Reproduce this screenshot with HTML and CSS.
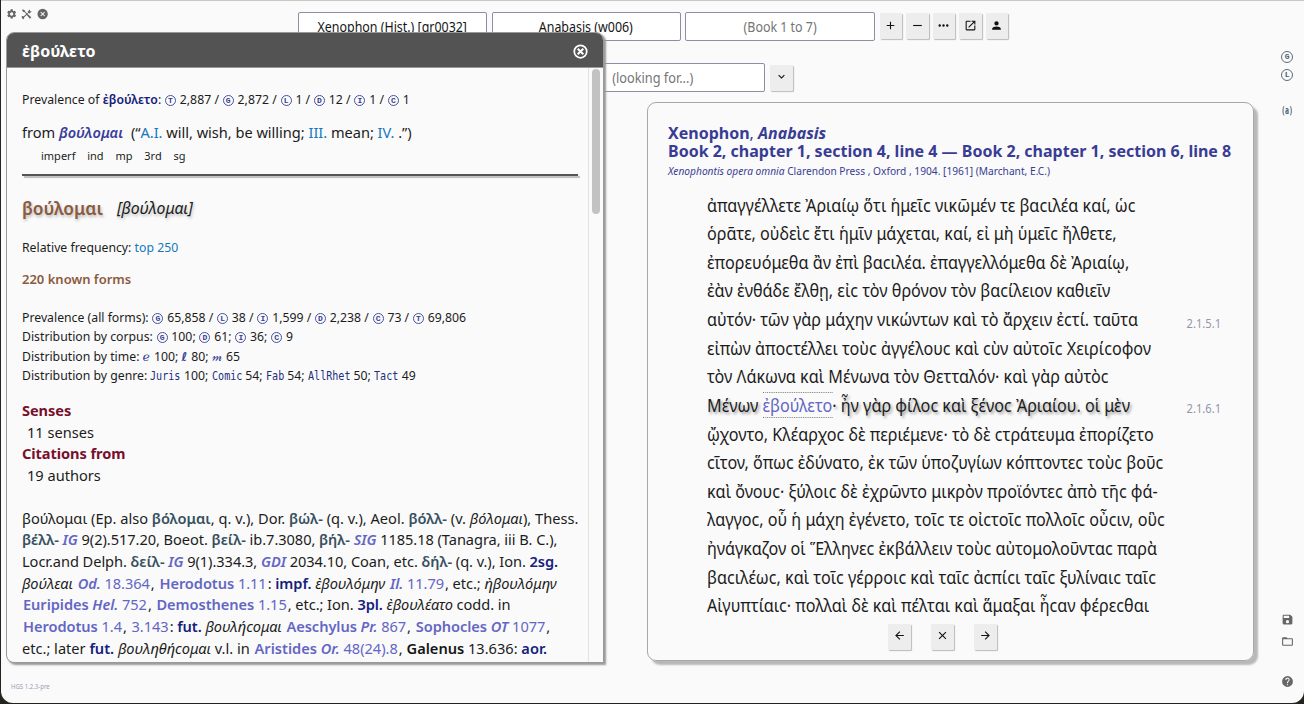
FILE: index.html
```html
<!DOCTYPE html>
<html lang="en">
<head>
<meta charset="utf-8">
<title>Xenophon, Anabasis</title>
<link rel="stylesheet" href="styles.css">
</head>
<body>
<svg class="defs" width="0" height="0" aria-hidden="true">
  <symbol id="gear" viewBox="0 0 24 24"><path fill-rule="evenodd" d="M19.140 12.940c.04-.3.06-.61.06-.94 0-.32-.02-.64-.07-.94l2.030-1.580a.49.49 0 0 0 .12-.61l-1.920-3.320a.49.49 0 0 0-.59-.22l-2.390.96a7 7 0 0 0-1.620-.94l-.36-2.540A.48.48 0 0 0 13.920 2h-3.840a.48.48 0 0 0-.47.41l-.36 2.540c-.59.24-1.130.57-1.620.94l-2.390-.96a.48.48 0 0 0-.59.22L2.740 8.870a.48.48 0 0 0 .12.61l2.030 1.580a6.500 6.500 0 0 0 0 1.880l-2.030 1.580a.49.49 0 0 0-.12.61l1.920 3.320c.12.22.37.29.59.22l2.390-.96c.5.38 1.030.7 1.620.94l.36 2.540c.05.24.24.41.48.41h3.840c.24 0 .44-.17.47-.41l.36-2.540a7 7 0 0 0 1.620-.94l2.390.96c.22.08.47 0 .59-.22l1.920-3.320a.48.48 0 0 0-.12-.61zM12 15.600a3.600 3.600 0 1 1 0-7.200 3.600 3.600 0 0 1 0 7.200z"/></symbol>
  <symbol id="tools" viewBox="0 0 24 24"><path d="M2 4l2-2 5 3v2l4 4 2-2-1-2 5-5v3l1 1h3l-5 5-2-1-2 2 8 7-3 3-7-8-6 6 1 2-3 1-2-3-1-2 2-2 3 1 5-5-4-4H5z"/></symbol>
  <symbol id="cancel" viewBox="0 0 24 24"><path fill-rule="evenodd" d="M12 1a11 11 0 1 0 0 22 11 11 0 0 0 0-22zm5 14.600L15.600 17 12 13.400 8.400 17 7 15.600 10.600 12 7 8.400 8.400 7 12 10.600 15.600 7 17 8.400 13.400 12z"/></symbol>
  <symbol id="close" viewBox="0 0 24 24"><circle cx="12" cy="12" r="10" fill="none" stroke="currentColor" stroke-width="2.800"/><path d="M7.500 7.500l9 9M16.500 7.500l-9 9" fill="none" stroke="currentColor" stroke-width="3.200"/></symbol>
  <symbol id="plus" viewBox="0 0 24 24"><path d="M19 13h-6v6h-2v-6H5v-2h6V5h2v6h6z"/></symbol>
  <symbol id="minus" viewBox="0 0 24 24"><path d="M20 13H4v-2h16z"/></symbol>
  <symbol id="dots" viewBox="0 0 24 24"><circle cx="5" cy="12" r="2.200"/><circle cx="12" cy="12" r="2.200"/><circle cx="19" cy="12" r="2.200"/></symbol>
  <symbol id="open" viewBox="0 0 24 24"><path d="M19 19H5V5h7V3H5a2 2 0 0 0-2 2v14a2 2 0 0 0 2 2h14a2 2 0 0 0 2-2v-7h-2zM14 3v2h3.590l-9.830 9.830 1.410 1.410L19 6.410V10h2V3z"/></symbol>
  <symbol id="person" viewBox="0 0 24 24"><path d="M12 12a4 4 0 1 0 0-8 4 4 0 0 0 0 8zm0 2c-2.670 0-8 1.340-8 4v2h16v-2c0-2.660-5.330-4-8-4z"/></symbol>
  <symbol id="chevron" viewBox="0 0 24 24"><path d="M7.410 8.590L12 13.170l4.590-4.580L18 10l-6 6-6-6z"/></symbol>
  <symbol id="back" viewBox="0 0 24 24"><path d="M20 11H7.830l5.590-5.590L12 4l-8 8 8 8 1.410-1.410L7.830 13H20z"/></symbol>
  <symbol id="times" viewBox="0 0 24 24"><path d="M19 6.410L17.590 5 12 10.590 6.410 5 5 6.410 10.590 12 5 17.590 6.410 19 12 13.410 17.590 19 19 17.590 13.410 12z"/></symbol>
  <symbol id="forward" viewBox="0 0 24 24"><path d="M12 4l-1.410 1.410L16.170 11H4v2h12.170l-5.580 5.590L12 20l8-8z"/></symbol>
  <symbol id="save" viewBox="0 0 24 24"><path d="M17 3H5a2 2 0 0 0-2 2v14a2 2 0 0 0 2 2h14a2 2 0 0 0 2-2V7zm-5 16a3 3 0 1 1 0-6 3 3 0 0 1 0 6zm3-10H5V5h10z"/></symbol>
  <symbol id="folder" viewBox="0 0 24 24"><path d="M20 6h-8l-2-2H4a2 2 0 0 0-2 2v12a2 2 0 0 0 2 2h16a2 2 0 0 0 2-2V8a2 2 0 0 0-2-2zm0 12H4V8h16z"/></symbol>
  <symbol id="help" viewBox="0 0 24 24"><path d="M12 2a10 10 0 1 0 0 20 10 10 0 0 0 0-20zm1 17h-2v-2h2zm2.070-7.750l-.9.920C13.450 12.900 13 13.500 13 15h-2v-.5c0-1.100.45-2.100 1.170-2.830l1.240-1.260A2 2 0 1 0 10 9H8a4 4 0 1 1 7.070 2.250z"/></symbol>
</svg>

<div class="window">
  <div class="app-tools">
    <svg><use href="#gear"/></svg><svg><use href="#tools"/></svg><svg><use href="#cancel"/></svg>
  </div>
  <main class="reader">
    <div class="selectors">
      <div class="field"><span>Xenophon (Hist.) [gr0032]</span></div>
      <div class="field"><span>Anabasis (w006)</span></div>
      <div class="field hint"><span>(Book 1 to 7)</span></div>
      <div class="buttons">
        <button><svg><use href="#plus"/></svg></button>
        <button><svg><use href="#minus"/></svg></button>
        <button><svg><use href="#dots"/></svg></button>
        <button><svg><use href="#open"/></svg></button>
        <button><svg><use href="#person"/></svg></button>
      </div>
    </div>
    <div class="search">
      <div class="field hint"><span>(looking for...)</span></div>
      <button><svg><use href="#chevron"/></svg></button>
    </div>
    <section class="passage">
      <h1>Xenophon<span class="light">,</span> <i>Anabasis</i></h1>
      <h1>Book 2, chapter 1, section 4, line 4 — Book 2, chapter 1, section 6, line 8</h1>
      <p class="edition"><span><i>Xenophontis opera omnia</i> Clarendon Press , Oxford , 1904. [1961] (Marchant, E.C.)</span></p>
      <div class="lines">
        <div><span>ἀπαγγέλλετε Ἀριαίῳ ὅτι ἡμεῖϲ νικῶμέν τε βαϲιλέα καί, ὡϲ</span></div>
        <div><span>ὁρᾶτε, οὐδεὶϲ ἔτι ἡμῖν μάχεται, καί, εἰ μὴ ὑμεῖϲ ἤλθετε,</span></div>
        <div><span>ἐπορευόμεθα ἂν ἐπὶ βαϲιλέα. ἐπαγγελλόμεθα δὲ Ἀριαίῳ,</span></div>
        <div><span>ἐὰν ἐνθάδε ἔλθῃ, εἰϲ τὸν θρόνον τὸν βαϲίλειον καθιεῖν</span></div>
        <div><span>αὐτόν· τῶν γὰρ μάχην νικώντων καὶ τὸ ἄρχειν ἐϲτί. ταῦτα</span><em>2.1.5.1</em></div>
        <div><span>εἰπὼν ἀποϲτέλλει τοὺϲ ἀγγέλουϲ καὶ ϲὺν αὐτοῖϲ Χειρίϲοφον</span></div>
        <div><span>τὸν Λάκωνα καὶ Μένωνα τὸν Θετταλόν· καὶ γὰρ αὐτὸϲ</span></div>
        <div><span class="current">Μένων <b>ἐβούλετο</b>· ἦν γὰρ φίλοϲ καὶ ξένοϲ Ἀριαίου. οἱ μὲν</span><em>2.1.6.1</em></div>
        <div><span>ᾤχοντο, Κλέαρχοϲ δὲ περιέμενε· τὸ δὲ ϲτράτευμα ἐπορίζετο</span></div>
        <div><span>ϲῖτον, ὅπωϲ ἐδύνατο, ἐκ τῶν ὑποζυγίων κόπτοντεϲ τοὺϲ βοῦϲ</span></div>
        <div><span>καὶ ὄνουϲ· ξύλοιϲ δὲ ἐχρῶντο μικρὸν προϊόντεϲ ἀπὸ τῆϲ φά-</span></div>
        <div><span>λαγγοϲ, οὗ ἡ μάχη ἐγένετο, τοῖϲ τε οἰϲτοῖϲ πολλοῖϲ οὖϲιν, οὓϲ</span></div>
        <div><span>ἠνάγκαζον οἱ Ἕλληνεϲ ἐκβάλλειν τοὺϲ αὐτομολοῦνταϲ παρὰ</span></div>
        <div><span>βαϲιλέωϲ, καὶ τοῖϲ γέρροιϲ καὶ ταῖϲ ἀϲπίϲι ταῖϲ ξυλίναιϲ ταῖϲ</span></div>
        <div><span>Αἰγυπτίαιϲ· πολλαὶ δὲ καὶ πέλται καὶ ἅμαξαι ἦϲαν φέρεϲθαι</span></div>
      </div>
      <div class="pager">
        <button><svg><use href="#back"/></svg></button>
        <button><svg><use href="#times"/></svg></button>
        <button><svg><use href="#forward"/></svg></button>
      </div>
    </section>
  </main>
  <aside class="rail">
    <span class="ring">G</span><span class="ring">L</span><span class="alpha">(a)</span>
    <svg class="first"><use href="#save"/></svg><svg><use href="#folder"/></svg><svg class="last"><use href="#help"/></svg>
  </aside>
  <footer><span>HGS 1.2.3-pre</span></footer>

  <section class="dialog">
    <header><span>ἐβούλετο</span><svg><use href="#close"/></svg></header>
    <div class="body">
      <div class="entry">
        <p class="small prevalence">Prevalence of <b class="navy">ἐβούλετο</b>: <s>T</s> 2,887 / <s>G</s> 2,872 / <s>L</s> 1 / <s>D</s> 12 / <s>I</s> 1 / <s>C</s> 1</p>
        <p class="from">from <b class="indigo"><i>βούλομαι</i></b>&nbsp; (“<a>A.I.</a> will, wish, be willing; <a>III.</a> mean; <a>IV.</a> .”)</p>
        <p class="parse"><span>imperf</span><span>ind</span><span>mp</span><span>3rd</span><span>sg</span></p>
        <hr>
        <p class="head"><b>βούλομαι</b><i>[βούλομαι]</i></p>
        <p class="small freq">Relative frequency: <a>top 250</a></p>
        <p class="small forms">220 known forms</p>
        <div class="stats small">
          <p>Prevalence (all forms): <s>G</s> 65,858 / <s>L</s> 38 / <s>I</s> 1,599 / <s>D</s> 2,238 / <s>C</s> 73 / <s>T</s> 69,806</p>
          <p>Distribution by corpus: <s>G</s> 100; <s>D</s> 61; <s>I</s> 36; <s>C</s> 9</p>
          <p>Distribution by time: <q>ℯ</q> 100; <q class="ell">ℓ</q> 80; <q>𝓂</q> 65</p>
          <p>Distribution by genre: <code style="--n:5"><span>Juris</span></code> 100; <code style="--n:5"><span>Comic</span></code> 54; <code style="--n:3"><span>Fab</span></code> 54; <code style="--n:7"><span>AllRhet</span></code> 50; <code style="--n:4"><span>Tact</span></code> 49</p>
        </div>
        <div class="summary">
          <h2>Senses</h2><p>11 senses</p>
          <h2>Citations from</h2><p>19 authors</p>
        </div>
        <div class="article">
          <p>βούλομαι (Ep. also <b class="slate">βόλομαι</b>, q. v.), Dor. <b class="slate">βώλ-</b> (q. v.), Aeol. <b class="slate">βόλλ-</b> (v. <i>βόλομαι</i>), Thess.</p>
          <p class="tight"><b class="slate">βέλλ-</b> <b><i>IG</i></b> 9(2).517.20, Boeot. <b class="slate">βείλ-</b> ib.7.3080, <b class="slate">βήλ-</b> <b><i>SIG</i></b> 1185.18 (Tanagra, iii B. C.),</p>
          <p class="tight">Locr.and Delph. <b class="slate">δείλ-</b> <b><i>IG</i></b> 9(1).334.3, <b><i>GDI</i></b> 2034.10, Coan, etc. <b class="slate">δήλ-</b> (q. v.), Ion. <b class="navy">2sg.</b></p>
          <p class="tight"><i>βούλεαι</i> <u><b><i>Od.</i></b> 18.364</u>, <u><b>Herodotus</b> 1.11</u>: <b class="navy">impf.</b> <i>ἐβουλόμην</i> <u><b><i>Il.</i></b> 11.79</u>, etc.; <i>ἠβουλόμην</i></p>
          <p class="tight"><u><b>Euripides <i>Hel.</i></b> 752</u>, <u><b>Demosthenes</b> 1.15</u>, etc.; Ion. <b class="navy">3pl.</b> <i>ἐβουλέατο</i> codd. in</p>
          <p class="tight"><u><b>Herodotus</b> 1.4</u>, <u>3.143</u>: <b class="navy">fut.</b> <i>βουλήϲομαι</i> <u><b>Aeschylus <i>Pr.</i></b> 867</u>, <u><b>Sophocles <i>OT</i></b> 1077</u>,</p>
          <p>etc.; later <b class="navy">fut.</b> <i>βουληθήϲομαι</i> v.l. in <u><b>Aristides <i>Or.</i></b> 48(24).8</u>, <b class="dark">Galenus</b> 13.636: <b class="navy">aor.</b></p>
        </div>
      </div>
      <div class="scroll"><div class="thumb"></div></div>
    </div>
  </section>
</div>
</body>
</html>
```

FILE: styles.css
```css
* { box-sizing: border-box; }
body { margin: 0; width: 1304px; height: 704px; overflow: hidden; background: #24241f; font-family: "Noto Sans", sans-serif; color: #1c1c1c; }
p, h1, h2 { margin: 0; font-weight: 400; }
s, u, a { text-decoration: none; }
svg { fill: currentColor; display: block; flex: none; }
.defs { position: absolute; }
b { font-weight: 600; }
.window { position: relative; height: 703px; margin-left: 1px; padding-top: 12px; background: #fafafa; border-radius: 0 0 12px 12px; box-shadow: inset 0 2px 0 -1px #c8c8c8; display: grid; grid-template-columns: 297px 960px 1fr; grid-template-rows: 665px 1fr; }
.app-tools { display: flex; gap: 4px; margin: -4px 0 0 5px; color: #666; height: 12px; }
.app-tools svg { width: 11.300px; height: 12px; }
.selectors { display: flex; gap: 4.500px; height: 29px; }
.field { display: flex; justify-content: center; width: 189px; height: 29px; border: 1px solid #8f8ca4; border-radius: 2px; background: #fff; font-size: 15px; line-height: 27px; white-space: nowrap; color: #151515; }
.field span { transform: scaleX(.828); }
.selectors .hint { width: 190px; }
.hint { color: #757575; }
.buttons { display: flex; gap: 4px; padding-top: 1px; }
button { width: 22.500px; height: 26px; padding: 0 0 2px; border: 0; border-radius: 1px; background: #ededed; box-shadow: 1px 1px 1px #bbb; display: flex; align-items: center; justify-content: center; color: #111; }
button svg { width: 13px; height: 13px; }
.search { display: flex; gap: 5px; margin: 22px 0 0 198px; }
.search .field { width: 269px; padding-left: 44px; }
.search .field span { transform: scaleX(.85); }
.search button { margin-top: 1.500px; }
.passage { width: 607px; height: 559px; margin: 10px 0 0 349px; padding: 21px 20px; border: 1px solid #a8a8a8; border-radius: 9px; box-shadow: 4px 4px 2px #b8b8b8; }
.passage h1 { font-size: 16px; line-height: 18px; font-weight: 700; color: #393c94; white-space: nowrap; }
.passage .light { font-weight: 400; }
.edition { font-size: 11px; line-height: 20px; margin-top: 1px; color: #393c94; white-space: nowrap; }
.edition span { display: inline-block; transform: scaleX(.926); transform-origin: 0 0; }
.lines { padding: 9.500px 12px 0 39px; font-size: 18px; white-space: nowrap; }
.lines div { display: flex; justify-content: space-between; height: 28.640px; line-height: 28.640px; }
.lines div > span { width: 0; transform: scaleX(.897); transform-origin: 0 0; }
.lines em { flex: none; font-size: 12px; font-style: normal; color: #9794aa; padding-top: 4.500px; transform: scaleX(.93); transform-origin: 100% 0; }
.current { text-shadow: 2px 2px 3px #999; }
.current b { font-weight: 400; color: #6466c4; border: 1px dotted #777; border-width: 1px 0; text-shadow: none; }
.pager { display: flex; justify-content: center; gap: 20.500px; padding: 4px 16px 0 0; }
.rail { display: flex; flex-direction: column; align-items: center; color: #666; padding: 39px 0 0 12.500px; }
s { display: inline-flex; align-items: center; justify-content: center; width: 11px; height: 11px; margin: 0 .6px; border: 1px solid #4650a0; border-radius: 50%; font: bold 8px/9px "Liberation Mono", monospace; color: #35408e; vertical-align: 1px; }
.ring { width: 12px; height: 12px; border: 1px solid #5b6c7a; border-radius: 50%; font: bold 8px/10px "Liberation Mono", monospace; color: #4b6072; text-align: center; margin-bottom: 6px; }
.alpha { font: bold 10px/12px "DejaVu Sans Mono", monospace; transform: scaleX(.65); margin-top: 18px; color: #4b6072; }
.rail svg { width: 13px; height: 13px; margin-top: 9px; }
.rail .first { margin-top: 496px; } .rail .last { margin-top: 27px; }
footer { grid-column: 1; padding-left: 10px; font-size: 7px; line-height: 20px; color: #9d9bb0; }
footer span { display: inline-block; transform: scaleX(.86); transform-origin: 0 0; }
.dialog { position: absolute; left: 5px; top: 32px; width: 598px; height: 631px; border: 1px solid #999; border-radius: 8px 8px 0 8px; background: #fafafa; box-shadow: 2px 2px 2px #999; overflow: hidden; }
.dialog header { height: 35px; background: #535353; color: #fff; border-bottom: 1px solid #999; display: flex; justify-content: space-between; align-items: center; padding: 2px 15px 0; font-size: 16px; font-weight: 700; }
.dialog header svg { width: 15px; height: 15px; }
.body { display: flex; height: 594px; }
.entry { flex: none; width: 581px; padding: 22px 0 0 15px; white-space: nowrap; font-size: 14.600px; }
.small { font-size: 12.250px; line-height: 20px; }
.prevalence { letter-spacing: .02px; }
.navy { color: #14207c; } .indigo { color: #3b3f9b; } .slate { color: #37505f; } a { color: #1478bc; }
q { quotes: none; color: #35408e; font-family: "DejaVu Sans", sans-serif; font-size: 12px; line-height: 1; margin-right: 1px; }
.ell { font-weight: 700; }
.from { line-height: 24px; margin-top: 10px; letter-spacing: -.02px; }
.parse { display: flex; gap: 11.800px; padding-left: 19px; font-size: 11px; line-height: 20px; margin-top: 2px; }
hr { height: 2px; width: 556px; border: 0; margin: 8px 0 0; background: #555; box-shadow: 2px 2px 1px #bbb; }
.head { display: flex; gap: 14px; margin-top: 19px; font-size: 15.800px; line-height: 26px; text-shadow: 1px 2px 3px #bbb; }
.head b { font-size: 17.400px; color: #8b5a40; }
.freq { margin-top: 17px; } .small.forms { margin-top: 11px; color: #8b5a40; font-weight: 600; font-size: 13px; }
.stats { margin-top: 19px; } .stats p { height: 19.400px; }
code { display: inline-block; width: calc(6.100px * var(--n)); height: 14px; line-height: 14px; font-family: "DejaVu Sans Mono", monospace; font-size: 12px; color: #1c2f80; }
code span { display: inline-block; transform: scaleX(.84); transform-origin: 0 0; }
.summary { margin-top: 14.400px; line-height: 21.700px; } .summary h2 { font-size: 14.600px; font-weight: 700; letter-spacing: -.08px; color: #78102c; } .summary p { padding-left: 5px; }
.article { margin-top: 21px; line-height: 21.660px; }
.article .tight { letter-spacing: -.05px; }
.article u { padding: 0 1px; }
.article u, .article b:not([class]) { color: #6466c4; }
.article .dark { color: #151515; }
.scroll { width: 15px; border-left: 1px solid #e3e3e3; padding: 1px 3px; }
.thumb { width: 8px; height: 145px; border-radius: 4px; background: #c2c2c2; }
```
